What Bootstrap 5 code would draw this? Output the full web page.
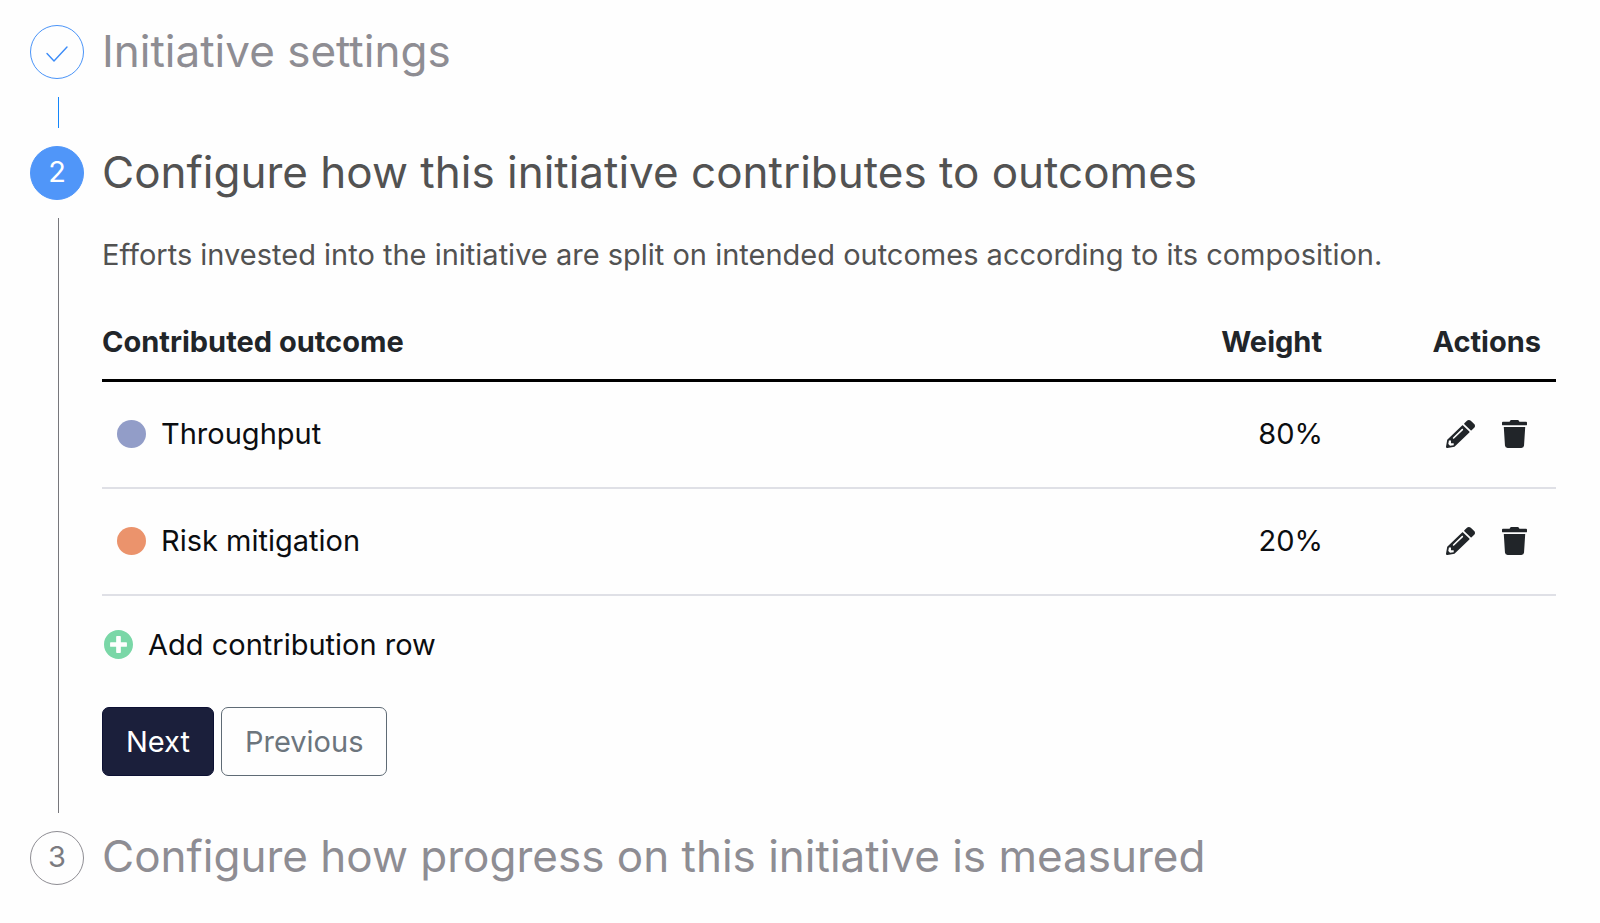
<!DOCTYPE html>
<html lang="en">
<head>
<meta charset="utf-8">
<meta name="viewport" content="width=device-width, initial-scale=1">
<title>Initiative setup</title>
<link href="https://cdn.jsdelivr.net/npm/bootstrap@5.3.0/dist/css/bootstrap.min.css" rel="stylesheet">
<style>
  body { font-family: Inter, "Liberation Sans", sans-serif; font-size: 29px; line-height: 44px; color: #0b0d10; background: #fefefe; }
  .stepper { padding: 25px 44px 25px 30px; }
  .step-head { height: 54px; gap: 18px; }
  .step-title { font-size: 44px; line-height: 50px; padding-bottom: 3px; font-weight: 400; color: #8e8d93; }
  .step-dot { width: 54px; height: 54px; border: 1px solid #8e8d93; border-radius: 50%; color: #7b7b80; flex: none; }
  .step-num { font-size: 29px; line-height: 30px; padding-bottom: 2px; }
  .is-done .step-dot { border-color: #4a94f8; color: #3c8cf8; padding-top: 3px; }
  .is-active .step-dot { background: #5096f9; border-color: #5096f9; color: #fff; }
  .is-active .step-title, .step-intro { color: #525252; }
  .step-body { margin: 18px 0 18px 28px; padding-left: 43px; border-left: 1px solid #77777c; min-height: 31px; }
  .is-done .step-body { border-color: #1486fb; }
  .is-active .step-body { padding-top: 15px; padding-bottom: 37px; }
  .step-intro { margin-bottom: 28px; }
  .outcomes { color: inherit; --bs-table-color: #0b0d10; --bs-table-bg: transparent; margin-bottom: 27px; }
  .outcomes th { padding: 15px 15px 15px 0; color: #212529; font-weight: 700; border-bottom: 3px solid #000; }
  .outcomes td { height: 107px; padding: 0 14px 0 15px; vertical-align: middle; border-bottom: 2px solid #dfe0e6; }
  .outcomes td:last-child { padding-right: 29px; }
  .col-weight { width: 220px; }
  .col-actions { width: 219px; }
  .outcome-name { gap: 15px; }
  .swatch { width: 29px; height: 28px; border-radius: 50%; flex: none; }
  .swatch-throughput { background: #929dc8; }
  .swatch-risk { background: #eb936c; }
  .icon-btn { color: #212529; line-height: 1; }
  .actions { gap: 27px; }
  .add-row { color: inherit; gap: 15px; margin-bottom: 40px; padding-left: 2px; }
  .btn-step { font-size: 29px; line-height: 43px; padding: 12px 23px; border-radius: 7px; --bs-btn-border-width: 1px; }
  .btn-next { background: #1b1f3b; border-color: #0c1033; color: #fff; }
  .btn-prev { border-color: #5f6b75; color: #6c757d; }
  .step-buttons { gap: 7px; }
</style>
</head>
<body>
<main class="stepper">
  <section class="is-done">
    <div class="step-head d-flex align-items-center">
      <span class="step-dot d-flex align-items-center justify-content-center">
        <svg width="22" height="16" viewBox="0 0 22 16" fill="none" stroke="currentColor" stroke-width="1.400" stroke-linecap="round" stroke-linejoin="round" aria-hidden="true"><path d="M1 7.500 8 15 21 1"/></svg>
      </span>
      <h2 class="step-title mb-0">Initiative settings</h2>
    </div>
    <div class="step-body"></div>
  </section>

  <section class="is-active">
    <div class="step-head d-flex align-items-center">
      <span class="step-dot d-flex align-items-center justify-content-center step-num">2</span>
      <h2 class="step-title mb-0">Configure how this initiative contributes to outcomes</h2>
    </div>
    <div class="step-body">
      <p class="step-intro">Efforts invested into the initiative are split on intended outcomes according to its composition.</p>
      <table class="table outcomes">
        <thead>
          <tr>
            <th scope="col">Contributed outcome</th>
            <th scope="col" class="col-weight text-end">Weight</th>
            <th scope="col" class="col-actions text-end">Actions</th>
          </tr>
        </thead>
        <tbody>
          <tr>
            <td><div class="outcome-name d-flex align-items-center"><span class="swatch swatch-throughput"></span>Throughput</div></td>
            <td class="text-end">80%</td>
            <td>
              <div class="actions d-flex align-items-center justify-content-end">
                <button type="button" class="icon-btn btn border-0 p-0" aria-label="Edit Throughput"><svg class="d-block" width="29" height="28" viewBox="0 0 512 512" preserveAspectRatio="none" fill="currentColor"><use href="#pencil"/></svg></button>
                <button type="button" class="icon-btn btn border-0 p-0" aria-label="Delete Throughput"><svg class="d-block" width="25" height="28" viewBox="0 0 448 512" preserveAspectRatio="none" fill="currentColor"><use href="#trash"/></svg></button>
              </div>
            </td>
          </tr>
          <tr>
            <td><div class="outcome-name d-flex align-items-center"><span class="swatch swatch-risk"></span>Risk mitigation</div></td>
            <td class="text-end">20%</td>
            <td>
              <div class="actions d-flex align-items-center justify-content-end">
                <button type="button" class="icon-btn btn border-0 p-0" aria-label="Edit Risk mitigation"><svg class="d-block" width="29" height="28" viewBox="0 0 512 512" preserveAspectRatio="none" fill="currentColor"><use href="#pencil"/></svg></button>
                <button type="button" class="icon-btn btn border-0 p-0" aria-label="Delete Risk mitigation"><svg class="d-block" width="25" height="28" viewBox="0 0 448 512" preserveAspectRatio="none" fill="currentColor"><use href="#trash"/></svg></button>
              </div>
            </td>
          </tr>
        </tbody>
      </table>
      <button type="button" class="add-row d-flex align-items-center bg-transparent border-0 py-0 pe-0">
        <svg width="29" height="29" viewBox="8 8 496 496" fill="#7ad7a7" aria-hidden="true"><path d="M256 8C119 8 8 119 8 256s111 248 248 248 248-111 248-248S393 8 256 8zm144 276c0 6.600-5.400 12-12 12h-92v92c0 6.600-5.400 12-12 12h-56c-6.600 0-12-5.400-12-12v-92h-92c-6.600 0-12-5.400-12-12v-56c0-6.600 5.400-12 12-12h92v-92c0-6.600 5.400-12 12-12h56c6.600 0 12 5.400 12 12v92h92c6.600 0 12 5.400 12 12v56z"/></svg>
        Add contribution row
      </button>
      <div class="step-buttons d-flex">
        <button type="button" class="btn btn-step btn-next">Next</button>
        <button type="button" class="btn btn-step btn-prev">Previous</button>
      </div>
    </div>
  </section>

  <section>
    <div class="step-head d-flex align-items-center">
      <span class="step-dot d-flex align-items-center justify-content-center step-num">3</span>
      <h2 class="step-title mb-0">Configure how progress on this initiative is measured</h2>
    </div>
  </section>
</main>

<svg class="d-none" aria-hidden="true">
  <path id="pencil" d="M497.900 142.100l-46.100 46.100c-4.700 4.700-12.300 4.700-17 0l-111-111c-4.700-4.700-4.700-12.300 0-17l46.100-46.100c18.700-18.700 49.100-18.700 67.900 0l60.100 60.100c18.800 18.700 18.800 49.100 0 67.900zM284.200 99.800L21.600 362.400.4 483.900c-2.900 16.400 11.400 30.600 27.800 27.800l121.500-21.300 262.600-262.600c4.700-4.700 4.700-12.300 0-17l-111-111c-4.800-4.700-12.400-4.700-17.100 0zM124.100 339.900c-5.500-5.500-5.500-14.300 0-19.800l154-154c5.500-5.500 14.300-5.500 19.800 0s5.500 14.300 0 19.800l-154 154c-5.500 5.500-14.300 5.500-19.800 0zM88 424h48v36.300l-64.500 11.300-31.100-31.100L51.700 376H88v48z"/>
  <path id="trash" d="M432 32H312l-9.400-18.700A24 24 0 0 0 281.100 0H166.800a23.720 23.720 0 0 0-21.400 13.300L136 32H16A16 16 0 0 0 0 48v32a16 16 0 0 0 16 16h416a16 16 0 0 0 16-16V48a16 16 0 0 0-16-16zM53.200 467a48 48 0 0 0 47.900 45h245.800a48 48 0 0 0 47.900-45L416 128H32z"/>
</svg>
<script src="https://cdn.jsdelivr.net/npm/bootstrap@5.3.0/dist/js/bootstrap.bundle.min.js"></script>
</body>
</html>
